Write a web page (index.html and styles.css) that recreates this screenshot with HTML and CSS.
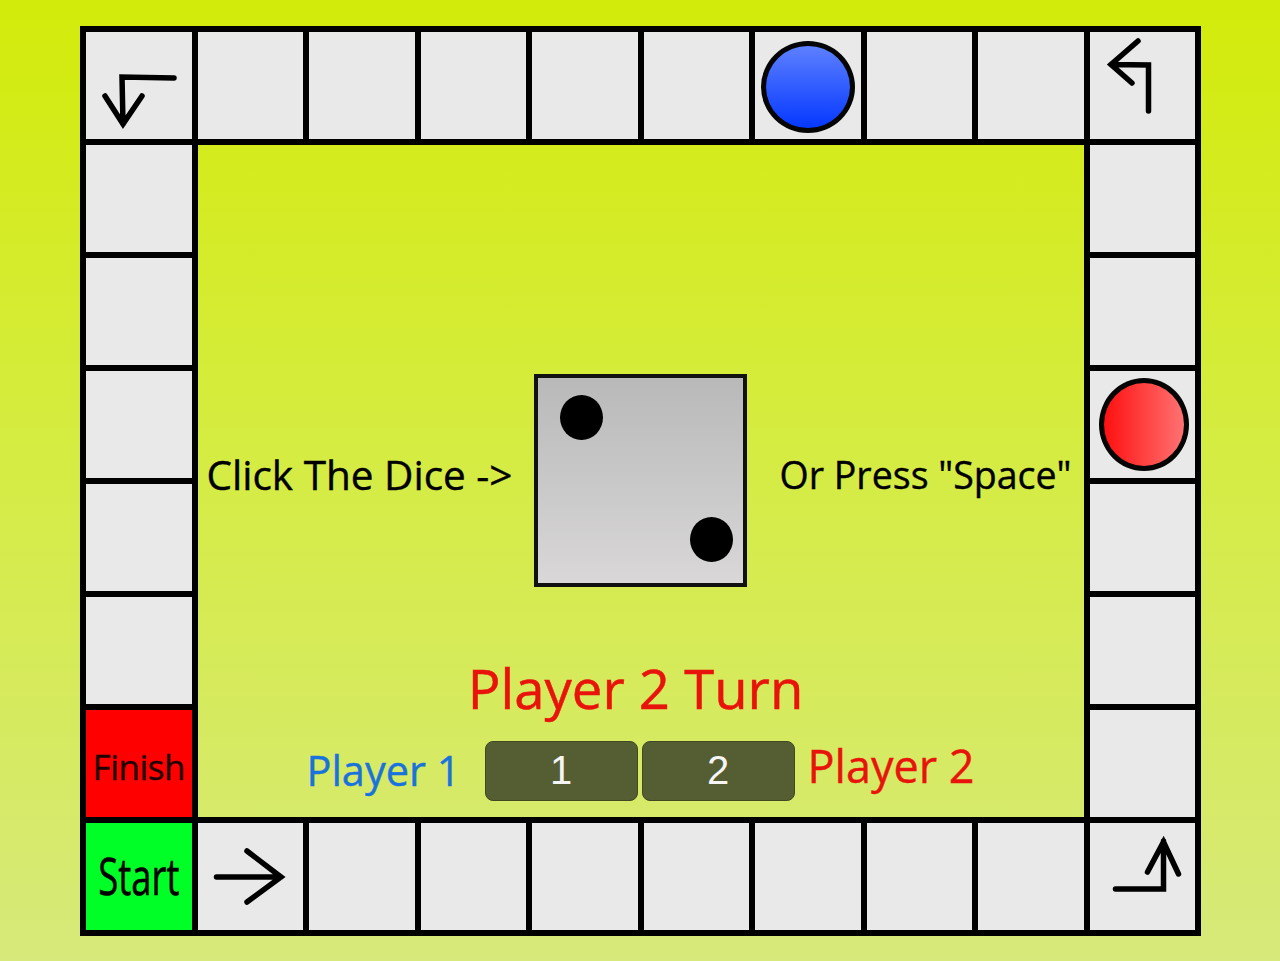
FILE: index.html
```html
<!DOCTYPE html>
<html>
<head>
<meta charset="utf-8">
<link rel="stylesheet" href="styles.css">
</head>
<body>
<div class="board">
  <!-- top row -->
  <div class="cell">
    <svg class="arrow" viewBox="0 0 107 108"><path d="M89 47 L37 46 L38 93 M20 65 L38 93 L57 65"/></svg>
  </div>
  <div class="cell"></div>
  <div class="cell"></div>
  <div class="cell"></div>
  <div class="cell"></div>
  <div class="cell"></div>
  <div class="cell"><div class="token blue"></div></div>
  <div class="cell"></div>
  <div class="cell"></div>
  <div class="cell">
    <svg class="arrow" viewBox="0 0 107 108"><path d="M59.5 80 L59.5 34 L22 33.5 M49 10 L22 33.5 L43 52"/></svg>
  </div>

  <!-- row 2 -->
  <div class="cell"></div>
  <div class="center">
    <div class="dice-row">
      <div class="hint hint-left">Click The Dice -&gt;</div>
      <div class="dice">
        <span class="pip pip-a"></span>
        <span class="pip pip-b"></span>
      </div>
      <div class="hint hint-right">Or Press "Space"</div>
    </div>
    <div class="turn">Player 2 Turn</div>
    <div class="players">
      <span class="p1">Player 1</span>
      <div class="btns">
        <div class="btn">1</div>
        <div class="btn">2</div>
      </div>
      <span class="p2">Player 2</span>
    </div>
  </div>
  <div class="cell"></div>

  <!-- rows 3-7 -->
  <div class="cell"></div>
  <div class="cell"></div>
  <div class="cell"></div>
  <div class="cell"><div class="token red"></div></div>
  <div class="cell"></div>
  <div class="cell"></div>
  <div class="cell"></div>
  <div class="cell"></div>
  <div class="cell finish"><span>Finish</span></div>
  <div class="cell"></div>

  <!-- bottom row -->
  <div class="cell start"><span>Start</span></div>
  <div class="cell">
    <svg class="arrow" viewBox="0 0 107 108"><path d="M19.5 55 L84 55 M50 29 L84 55 L50 80"/></svg>
  </div>
  <div class="cell"></div>
  <div class="cell"></div>
  <div class="cell"></div>
  <div class="cell"></div>
  <div class="cell"></div>
  <div class="cell"></div>
  <div class="cell"></div>
  <div class="cell">
    <svg class="arrow" viewBox="0 0 107 108"><path d="M26.5 67 L74.5 67 L74.5 19 M58.5 50 L74.5 20 L89.5 52"/></svg>
  </div>
</div>
</body>
</html>
```

FILE: styles.css
```css
html, body {
  margin: 0;
  padding: 0;
}
body {
  width: 1280px;
  height: 961px;
  overflow: hidden;
  background: linear-gradient(to bottom, #d3eb0a 0%, #d5ec40 45%, #d7e97a 100%);
  font-family: "Open Sans", "Noto Sans", sans-serif;
}
.board {
  margin: 26px 0 0 80px;
  display: grid;
  grid-template-columns: repeat(10, 111.5px);
  grid-template-rows: repeat(8, 113px);
  width: 1115px;
}
.cell {
  border: 6px solid #000;
  margin: 0 -6px -6px 0;
  background: #e9e9e9;
  position: relative;
  display: flex;
  align-items: center;
  justify-content: center;
}
.arrow {
  position: absolute;
  left: -1px;
  top: -1px;
  width: 107px;
  height: 108px;
}
.arrow path {
  fill: none;
  stroke: #000;
  stroke-width: 5.5;
  stroke-linecap: round;
  stroke-linejoin: miter;
}
.token {
  border-radius: 50%;
  border: 5px solid #050505;
}
.token.blue {
  width: 84px;
  height: 82px;
  margin-top: 2px;
  background: linear-gradient(to bottom, #5d80ff, #0538ff);
}
.token.red {
  width: 80px;
  height: 83px;
  margin-left: 4px;
  background: linear-gradient(to right, #ff1010, #ff7272);
}
.finish {
  background: #ff0000;
}
.finish span {
  font-size: 35px;
  color: #1e0000;
  letter-spacing: -0.5px;
  margin-top: 6px;
  -webkit-text-stroke: 0.4px #1e0000;
}
.start {
  background: #00ff26;
}
.start span {
  font-size: 52px;
  color: #000;
  display: inline-block;
  transform: scaleX(0.7);
  margin-top: -4px;
  -webkit-text-stroke: 0.6px #000;
}
.center {
  grid-column: span 8;
  grid-row: span 6;
  padding: 235px 0 0 6px;
  display: flex;
  flex-direction: column;
  align-items: center;
}
.dice-row {
  width: 100%;
  display: grid;
  grid-template-columns: 1fr auto 1fr;
  align-items: center;
}
.hint {
  font-size: 40.5px;
  color: #000;
  margin-top: -12px;
  white-space: nowrap;
  -webkit-text-stroke: 0.4px #000;
}
.hint-left {
  justify-self: start;
  padding-left: 9px;
}
.hint-right {
  justify-self: end;
  padding-right: 12px;
  font-size: 37.5px;
}
.dice {
  width: 205px;
  height: 205px;
  border: 4px solid #111;
  background: linear-gradient(to bottom, #b9b9b9, #d9d7d7);
  position: relative;
}
.pip {
  position: absolute;
  width: 43px;
  height: 45px;
  border-radius: 50%;
  background: #000;
}
.pip-a {
  left: 22px;
  top: 17px;
}
.pip-b {
  left: 152px;
  top: 139px;
}
.turn {
  font-size: 54.5px;
  line-height: 1;
  color: #e8140c;
  margin-top: 74px;
  margin-left: -10px;
  -webkit-text-stroke: 0.5px #e8140c;
}
.players {
  display: flex;
  align-items: center;
  margin-top: 25px;
}
.p1 {
  font-size: 41.5px;
  line-height: 1;
  color: #1a73dc;
  margin-right: 24px;
  margin-top: 0;
  -webkit-text-stroke: 0.4px #1a73dc;
}
.p2 {
  font-size: 45px;
  line-height: 1;
  color: #e8140c;
  margin-left: 13px;
  margin-top: -10px;
  -webkit-text-stroke: 0.4px #e8140c;
}
.btns {
  display: flex;
  gap: 4px;
}
.btn {
  box-sizing: border-box;
  width: 153px;
  height: 60px;
  border: 1.5px solid #414822;
  border-radius: 8px;
  background: #555d32;
  color: #f5f5f5;
  font-family: "Liberation Sans", Arial, sans-serif;
  font-size: 40px;
  display: flex;
  align-items: center;
  justify-content: center;
}
```
